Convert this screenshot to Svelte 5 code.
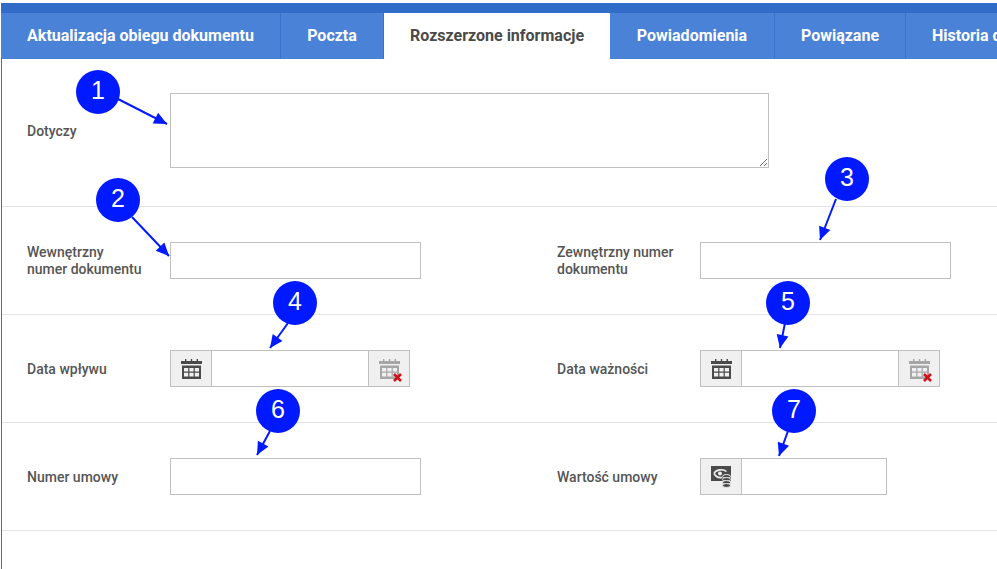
<script lang="ts">
	const tabs = [
		{ label: 'Aktualizacja obiegu dokumentu', width: 280 },
		{ label: 'Poczta', width: 103 },
		{ label: 'Rozszerzone informacje', width: 226, active: true },
		{ label: 'Powiadomienia', width: 165 },
		{ label: 'Powiązane', width: 131 },
		{ label: 'Historia dokumentu', width: 190 }
	];

	// numbered callouts drawn over the form: circle centre, then arrow start and tip
	const callouts = [
		{ n: 1, cx: 98, cy: 92, x1: 118, y1: 99, x2: 167, y2: 124 },
		{ n: 2, cx: 118, cy: 200, x1: 132, y1: 217, x2: 169, y2: 256 },
		{ n: 3, cx: 847, cy: 179, x1: 836, y1: 199, x2: 820, y2: 240 },
		{ n: 4, cx: 295, cy: 303, x1: 288, y1: 323, x2: 270, y2: 348 },
		{ n: 5, cx: 788, cy: 303, x1: 785, y1: 323, x2: 780, y2: 348 },
		{ n: 6, cx: 278, cy: 411, x1: 270, y1: 431, x2: 257, y2: 455 },
		{ n: 7, cx: 794, cy: 411, x1: 788, y1: 431, x2: 779, y2: 456 }
	];

	function arrowHead(c: { x1: number; y1: number; x2: number; y2: number }): string {
		const a = Math.atan2(c.y2 - c.y1, c.x2 - c.x1);
		const len = 13;
		const half = 6;
		const bx = c.x2 - Math.cos(a) * len;
		const by = c.y2 - Math.sin(a) * len;
		const px = Math.cos(a + Math.PI / 2) * half;
		const py = Math.sin(a + Math.PI / 2) * half;
		return `${c.x2},${c.y2} ${bx + px},${by + py} ${bx - px},${by - py}`;
	}
</script>

{#snippet calendar(color: string)}
	<svg width="21" height="20" viewBox="0 0 21 20" fill={color}>
		<rect x="4" y="0" width="1.4" height="3" />
		<rect x="9.8" y="0" width="1.4" height="3" />
		<rect x="15.6" y="0" width="1.4" height="3" />
		<rect x="0" y="2" width="21" height="3" />
		<path fill-rule="evenodd" d="M1 6.5h19V20H1zM3 9v3.6h4.2V9zM8.4 9v3.6h4.2V9zM13.8 9v3.6H18V9zM3 13.8v3.6h4.2v-3.6zM8.4 13.8v3.6h4.2v-3.6zM13.8 13.8v3.6H18v-3.6z" />
	</svg>
{/snippet}

{#snippet dateField()}
	<div class="group date">
		<span class="addon left">{@render calendar('#4a4a4a')}</span>
		<input type="text" />
		<span class="addon right">
			{@render calendar('#a6a6a6')}
			<svg class="clear" width="9" height="9" viewBox="0 0 9 9">
				<path d="M1 1l7 7M8 1L1 8" stroke="#c8141a" stroke-width="2.6" />
			</svg>
		</span>
	</div>
{/snippet}

<div class="page">
	<div class="tabs">
		{#each tabs as tab}
			<div class="tab" class:active={tab.active} style="width: {tab.width}px">{tab.label}</div>
		{/each}
	</div>

	<div class="form">
		<div class="row first">
			<label class="label" for="dotyczy">Dotyczy</label>
			<textarea id="dotyczy"></textarea>
		</div>

		<div class="row">
			<div class="col">
				<span class="label">Wewnętrzny<br />numer dokumentu</span>
				<input type="text" />
			</div>
			<div class="col">
				<span class="label">Zewnętrzny numer<br />dokumentu</span>
				<input type="text" />
			</div>
		</div>

		<div class="row">
			<div class="col">
				<span class="label one">Data wpływu</span>
				{@render dateField()}
			</div>
			<div class="col">
				<span class="label one">Data ważności</span>
				{@render dateField()}
			</div>
		</div>

		<div class="row">
			<div class="col">
				<span class="label one">Numer umowy</span>
				<input type="text" />
			</div>
			<div class="col">
				<span class="label one">Wartość umowy</span>
				<div class="group money">
					<span class="addon left">
						<svg width="21" height="22" viewBox="0 0 21 22">
							<rect x="0" y="0" width="20" height="15" fill="#4a4a4a" />
							<path d="M3 7.5C5 3.5 12 2.5 15.5 5.5M3 7.5C5 11 8 12 11 11.5" fill="none" stroke="#f0f0f0" stroke-width="1.6" />
							<circle cx="9" cy="7.5" r="2" fill="#f0f0f0" />
							<ellipse cx="15.5" cy="10.5" rx="4" ry="2" fill="#4a4a4a" stroke="#f0f0f0" />
							<ellipse cx="15.5" cy="13.5" rx="4" ry="2" fill="#4a4a4a" stroke="#f0f0f0" />
							<ellipse cx="15.5" cy="16.5" rx="4" ry="2" fill="#4a4a4a" stroke="#f0f0f0" />
							<ellipse cx="15.5" cy="19.5" rx="4" ry="2" fill="#4a4a4a" stroke="#f0f0f0" />
						</svg>
					</span>
					<input type="text" />
				</div>
			</div>
		</div>
	</div>

	<svg class="callouts" width="997" height="569" viewBox="0 0 997 569">
		{#each callouts as c}
			<line x1={c.x1} y1={c.y1} x2={c.x2} y2={c.y2} stroke="#0019ff" stroke-width="2" />
			<polygon points={arrowHead(c)} fill="#0019ff" />
			<circle cx={c.cx} cy={c.cy} r="22" fill="#0019ff" />
			<text x={c.cx} y={c.cy + 7} text-anchor="middle">{c.n}</text>
		{/each}
	</svg>
</div>

<style>
	:global(body) {
		margin: 0;
		overflow: hidden;
		background: #fff;
	}

	.page {
		position: relative;
		width: 997px;
		height: 569px;
		overflow: hidden;
		padding-top: 3px;
		box-sizing: border-box;
		font-family: Roboto, 'Liberation Sans', sans-serif;
		color: #4a4a4a;
	}

	.tabs {
		display: flex;
		height: 46px;
		margin-left: 1px;
		border-top: 10px solid #316dc8;
		background: #4a82d8;
		overflow: hidden;
	}

	.tab {
		flex-shrink: 0;
		box-sizing: border-box;
		display: flex;
		align-items: center;
		justify-content: center;
		white-space: nowrap;
		font-size: 16px;
		font-weight: 700;
		color: #fff;
		background: #4a82d8;
		border-right: 1px solid #3a72cc;
		padding-bottom: 2px;
	}

	.tab.active {
		background: #fff;
		color: #4a4a4a;
		border-right: 0;
	}

	.tab:last-child {
		justify-content: flex-start;
		padding-left: 26px;
		border-right: 0;
	}

	.form {
		margin-left: 1px;
		border-left: 1px solid #3f6fb5;
		height: 510px;
	}

	.row {
		display: grid;
		grid-template-columns: 530px 1fr;
		align-items: center;
		height: 107px;
		padding-left: 25px;
		border-bottom: 1px solid #e4e4e4;
	}

	.row.first {
		display: flex;
		height: 147px;
	}

	.col {
		display: flex;
		align-items: center;
	}

	.label {
		flex: 0 0 143px;
		font-size: 14px;
		font-weight: 500;
		line-height: 17px;
		color: #555;
	}

	.label.one {
		padding-top: 2px;
	}

	.first .label {
		width: 143px;
		padding-bottom: 2px;
	}

	input,
	textarea {
		box-sizing: border-box;
		margin: 0;
		padding: 0 6px;
		border: 1px solid #c0c0c0;
		border-radius: 0;
		background: #fff;
		outline: none;
	}

	.col > input {
		width: 251px;
		height: 37px;
	}

	textarea {
		display: block;
		width: 599px;
		height: 75px;
		margin-bottom: 4px;
	}

	.group {
		display: flex;
		height: 37px;
	}

	.group input {
		flex: 1;
		min-width: 0;
		height: 37px;
		border-left: 0;
	}

	.group.date {
		width: 240px;
	}

	.group.date input {
		border-right: 0;
	}

	.group.money {
		width: 187px;
	}

	.addon {
		position: relative;
		flex: 0 0 42px;
		box-sizing: border-box;
		display: flex;
		align-items: center;
		justify-content: center;
		border: 1px solid #c0c0c0;
		background: #f0f0f0;
	}

	.clear {
		position: absolute;
		right: 7px;
		bottom: 4px;
	}

	.callouts {
		position: absolute;
		inset: 0;
		pointer-events: none;
	}

	.callouts text {
		font-family: 'Liberation Sans', Arial, sans-serif;
		font-size: 25px;
		fill: #fff;
	}
</style>
